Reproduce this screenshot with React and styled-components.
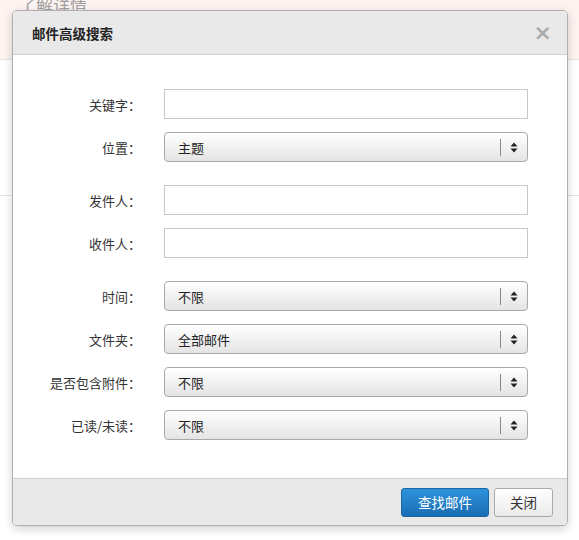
import React from "react";
import styled, { createGlobalStyle } from "styled-components";

const Global = createGlobalStyle`
  html, body { margin: 0; padding: 0; background: #fff; }
  body { font-family: "Noto Sans CJK SC", "Noto Sans", sans-serif; width: 579px; height: 540px; overflow: hidden; }
`;

const Page = styled.div`
  position: relative;
  width: 579px;
  height: 540px;
  background: #fff;
  overflow: hidden;
`;

const Banner = styled.div`
  height: 59px;
  background: #fdf3f1;
  border-bottom: 1px solid #e4e4e4;
  overflow: hidden;
`;

const BannerText = styled.div`
  margin: -6px 0 0 19px;
  font-size: 17px;
  color: #a0a0a0;
  line-height: 22px;
`;

const Divider = styled.div`
  margin-top: 135px;
  border-top: 1px solid #e4e4e4;
`;

const Dialog = styled.div`
  position: absolute;
  left: 12px;
  top: 10px;
  width: 554px;
  height: 514px;
  background: #fff;
  border: 1px solid #b0b0b0;
  border-radius: 5px;
  box-shadow: 0 3px 10px rgba(0, 0, 0, 0.18);
  display: flex;
  flex-direction: column;
  overflow: hidden;
`;

const Header = styled.div`
  height: 43px;
  background: #e9e9e9;
  border-bottom: 1px solid #cfcfcf;
  display: flex;
  align-items: center;
  justify-content: space-between;
  padding: 0 15px 0 19px;
  flex-shrink: 0;
`;

const Title = styled.div`
  font-size: 13.5px;
  font-weight: bold;
  color: #222;
`;

const Close = styled.div`
  font-family: "DejaVu Sans", sans-serif;
  font-size: 22px;
  line-height: 22px;
  color: #acacac;
  font-weight: bold;
`;

const Body = styled.div`
  flex: 1;
  padding: 34px 39px 0 0;
  display: flex;
  flex-direction: column;
`;

const Group = styled.div`
  display: flex;
  flex-direction: column;
  gap: 13px;
  margin-bottom: 23px;
`;

const Row = styled.div`
  display: grid;
  grid-template-columns: 128px 1fr;
  column-gap: 23px;
  align-items: center;
`;

const Label = styled.label`
  text-align: right;
  font-size: 13px;
  color: #333;
`;

const Input = styled.div`
  height: 28px;
  border: 1px solid #c8c8c8;
  background: #fff;
`;

const Select = styled.div`
  height: 28px;
  border: 1px solid #a9a9a9;
  border-radius: 4px;
  background: linear-gradient(#ffffff, #e4e4e4);
  display: flex;
  align-items: center;
  font-size: 13px;
  color: #222;
`;

const SelectText = styled.div`
  flex: 1;
  padding-left: 13px;
`;

const Sep = styled.div`
  width: 1px;
  height: 17px;
  background: #888;
`;

const Arrows = styled.div`
  width: 26px;
  display: flex;
  justify-content: center;
`;

const Footer = styled.div`
  height: 46px;
  background: #e9e9e9;
  border-top: 1px solid #cfcfcf;
  display: flex;
  align-items: center;
  justify-content: flex-end;
  gap: 5px;
  padding-right: 14px;
  flex-shrink: 0;
`;

const Button = styled.div`
  height: 27px;
  padding: 0 ${(p) => (p.$primary ? "16px" : "15px")};
  border-radius: 3px;
  display: flex;
  align-items: center;
  font-size: 13.5px;
  border: 1px solid ${(p) => (p.$primary ? "#1b68a8" : "#aaa")};
  background: ${(p) =>
    p.$primary ? "linear-gradient(#2d93dc, #1a6db3)" : "linear-gradient(#ffffff, #eaeaea)"};
  color: ${(p) => (p.$primary ? "#fff" : "#333")};
`;

const ArrowIcon = () => (
  <svg width="8" height="11" viewBox="0 0 8 11">
    <path d="M4 0.5 L7.5 4.5 H0.5 Z" fill="#222" />
    <path d="M4 10.5 L7.5 6.5 H0.5 Z" fill="#222" />
  </svg>
);

const Field = ({ label, select }) => (
  <Row>
    <Label>{label}：</Label>
    {select !== undefined ? (
      <Select>
        <SelectText>{select}</SelectText>
        <Sep />
        <Arrows>
          <ArrowIcon />
        </Arrows>
      </Select>
    ) : (
      <Input />
    )}
  </Row>
);

export default function App() {
  return (
    <Page>
      <Global />
      <Banner>
        <BannerText>了解详情</BannerText>
      </Banner>
      <Divider />
      <Dialog>
        <Header>
          <Title>邮件高级搜索</Title>
          <Close>×</Close>
        </Header>
        <Body>
          <Group>
            <Field label="关键字" />
            <Field label="位置" select="主题" />
          </Group>
          <Group>
            <Field label="发件人" />
            <Field label="收件人" />
          </Group>
          <Group>
            <Field label="时间" select="不限" />
            <Field label="文件夹" select="全部邮件" />
            <Field label="是否包含附件" select="不限" />
            <Field label="已读/未读" select="不限" />
          </Group>
        </Body>
        <Footer>
          <Button $primary>查找邮件</Button>
          <Button>关闭</Button>
        </Footer>
      </Dialog>
    </Page>
  );
}
